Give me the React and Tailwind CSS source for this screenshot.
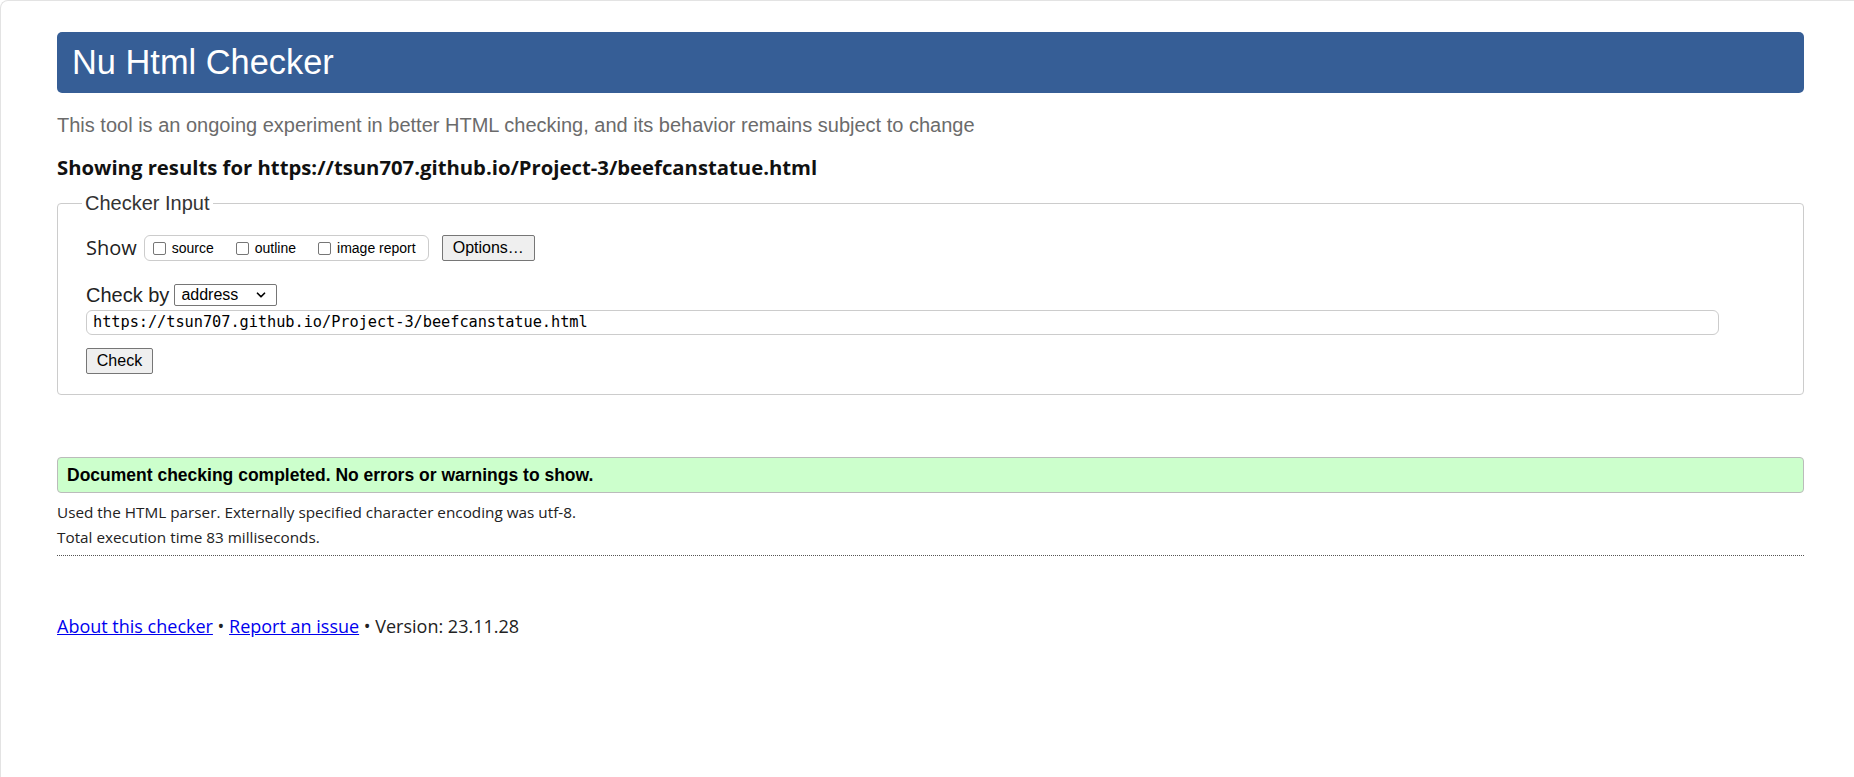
import { ChevronDown } from 'lucide-react';

function Box({ label }) {
  return (
    <label className="flex items-center">
      <span className="w-[13px] h-[13px] border border-[#767676] rounded-[2px] bg-white mr-[6px]" />
      <span className="text-[14px] text-black">{label}</span>
    </label>
  );
}

export default function App() {
  return (
    <div className="min-h-[777px] bg-white border-t border-l border-[#e3e3e3] rounded-tl-[8px] font-['Liberation_Sans',Arial,sans-serif] text-[#222]">
      <div className="pl-[56px] pr-[50px] pt-[31px] pb-[40px]">
        <div className="h-[61px] bg-[#365e96] rounded-[5px] flex items-center pl-[15px]">
          <h1 className="text-white text-[34.4px] leading-none">Nu Html Checker</h1>
        </div>

        <p className="mt-[20px] text-[20px] leading-[24px] text-[#6b6b6b]">
          This tool is an ongoing experiment in better HTML checking, and its behavior remains subject to change
        </p>

        <p className="mt-[18px] text-[20.3px] leading-[24px] font-bold text-[#111] font-['Open_Sans',sans-serif]">
          Showing results for https://tsun707.github.io/Project-3/beefcanstatue.html
        </p>

        <fieldset className="mt-[14px] border border-[#cccccc] rounded-[4px] pl-[28px] pr-[84px] pb-[20px]">
          <legend className="ml-[-4px] px-[3px] text-[20px] leading-[20px] text-[#333]">Checker Input</legend>

          <div className="mt-[22px] flex items-center h-[26px]">
            <span className="text-[20px] text-[#222] font-['Open_Sans',sans-serif] mr-[7px]">Show</span>
            <div className="h-[26px] w-[285px] border border-[#cccccc] rounded-[6px] flex items-center pl-[8px] gap-[22px]">
              <Box label="source" />
              <Box label="outline" />
              <Box label="image report" />
            </div>
            <button className="ml-[13px] h-[26px] w-[93px] bg-[#efefef] border border-[#767676] rounded-[2px] text-[16px] text-black">
              Options…
            </button>
          </div>

          <div className="mt-[23px] flex items-center h-[22px]">
            <span className="text-[20px] text-[#222] mr-[5px]">Check by</span>
            <div className="h-[22px] w-[103px] border border-[#767676] rounded-[2px] flex items-center justify-between pl-[6px] pr-[8px]">
              <span className="text-[16px] text-black">address</span>
              <ChevronDown className="w-[14px] h-[14px] text-black" strokeWidth={3} />
            </div>
          </div>

          <div className="mt-[4px] h-[25px] border border-[#cccccc] rounded-[6px] flex items-center pl-[6px]">
            <span className="text-[15.3px] text-black font-['DejaVu_Sans_Mono',monospace] tracking-[-0.05px]">
              https://tsun707.github.io/Project-3/beefcanstatue.html
            </span>
          </div>

          <button className="mt-[13px] h-[26px] w-[67px] bg-[#efefef] border border-[#767676] rounded-[2px] text-[16px] text-black">
            Check
          </button>
        </fieldset>

        <div className="mt-[62px] h-[36px] bg-[#ccffcc] border border-[#bbbbbb] rounded-[4px] flex items-center pl-[9px]">
          <span className="text-[17.5px] font-bold text-black">Document checking completed. No errors or warnings to show.</span>
        </div>

        <div className="mt-[7px] text-[15.3px] leading-[25px] text-[#222] font-['Open_Sans',sans-serif]">
          <p>Used the HTML parser. Externally specified character encoding was utf-8.</p>
          <p>Total execution time 83 milliseconds.</p>
        </div>

        <div className="mt-[5px] border-b border-dotted border-[#555]" />

        <p className="mt-[57px] text-[18px] text-[#222] font-['Open_Sans',sans-serif]">
          <a href="#" className="text-[#0000ee] underline">About this checker</a>
          <span> • </span>
          <a href="#" className="text-[#0000ee] underline">Report an issue</a>
          <span> • Version: 23.11.28</span>
        </p>
      </div>
    </div>
  );
}
